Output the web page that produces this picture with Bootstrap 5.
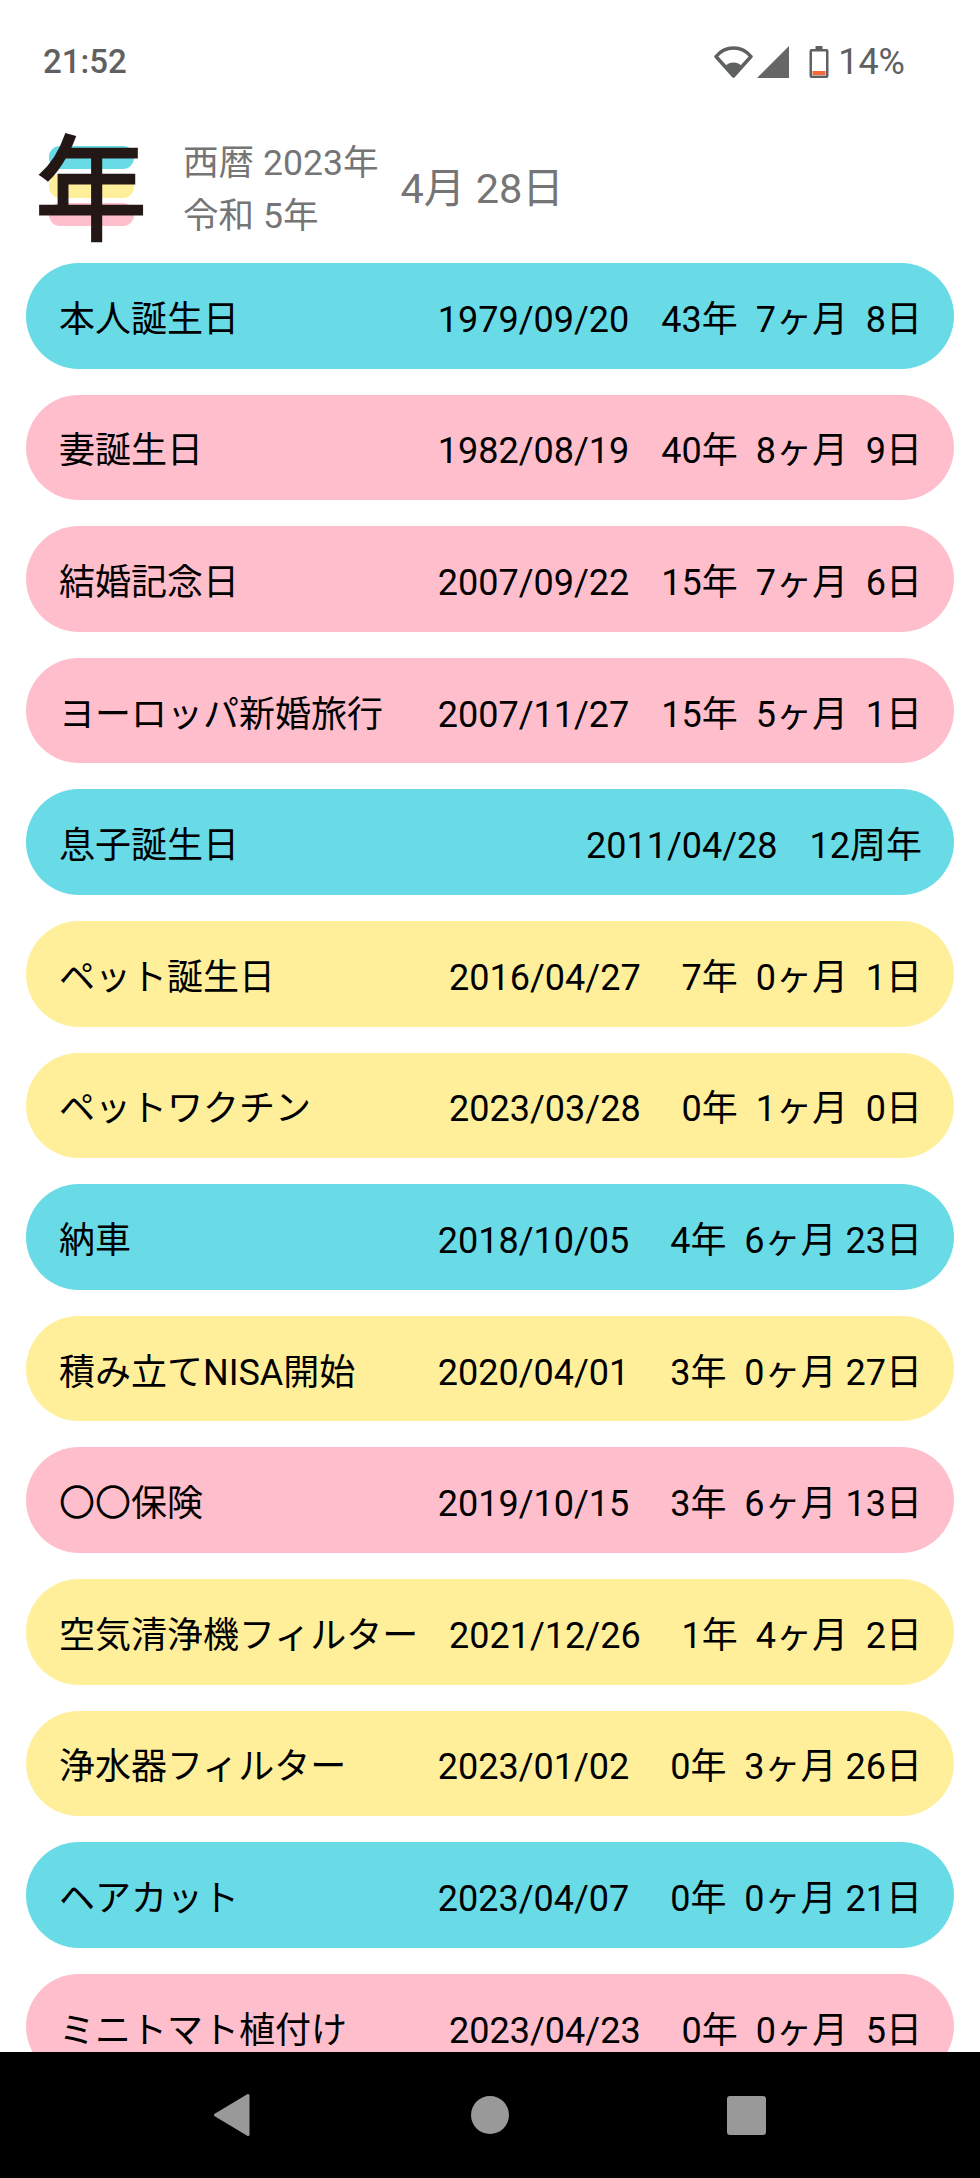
<!doctype html>
<html lang="ja"><head><meta charset="utf-8"><title>記念日</title>
<link href="https://cdn.jsdelivr.net/npm/bootstrap@5.3.0/dist/css/bootstrap.min.css" rel="stylesheet">
<style>
html,body{margin:0;background:#fff}
.phone{width:980px;height:2178px;overflow:hidden;font-family:Roboto,"Noto Sans CJK JP",sans-serif}
.stat{height:110px;padding:13px 75px 0 43px;color:#5f6062;font-size:33px}
.stat-time{font-weight:500}
.stat-ic{gap:4px}
.stat-pct{font-size:36px;margin-left:5px}
.head{height:153px;padding:6px 0 0 43px;color:#757575;font-size:35.6px}
.logo{width:96px;height:112px;flex:none;margin:-6px 44px 0 0}
.bar1,.bar2,.bar3{position:absolute;left:6px;width:85px;height:23px;border-radius:11px}
.bar1{top:15px;background:#68dbe7}.bar2{top:43px;height:24px;background:#ffef9b}.bar3{top:72px;background:#ffbecc}
.kanji{position:absolute;left:-8px;top:-6px;width:112px;text-align:center;font:400 112px/112px "Noto Sans CJK JP",sans-serif;color:#231815;-webkit-text-stroke:2.5px #231815;transform:scaleY(1.02)}
.lines{line-height:53px;margin-right:22px}
.today{font-size:41.5px}
.rows{flex:1;overflow:hidden;padding:0 26px;gap:26px}
.item{flex:none;height:105.6px;padding:8px 32px 0 33px;color:#000;font-size:36px;white-space:pre}
.i-b{background:#68dbe7}.i-p{background:#ffbecc}.i-y{background:#ffef9b}
.dt{margin-right:32px}
.navi{height:126px;background:#000;flex:none}
.navi svg{display:block}
.nav-a{margin-left:214px}.nav-b{margin-left:221px}.nav-c{margin-left:218px}
</style></head><body>
<div class="phone d-flex flex-column">
 <div class="stat d-flex align-items-center justify-content-between flex-none">
  <span class="stat-time">21:52</span>
  <span class="d-flex align-items-center stat-ic">
   <svg width="39" height="32" viewBox="0 0 39 32"><path d="M19.5 30 2 10.5C6.5 5 12.5 2 19.5 2S32.500 5 37 10.500Z" fill="none" stroke="#5f6062" stroke-width="3.500" stroke-linejoin="round"/><path d="M19.500 30 11 20.500C13 18 16 16.500 19.500 16.500S26 18 28 20.500Z" fill="#5f6062"/></svg>
   <svg width="32" height="32" viewBox="0 0 32 32"><path d="M32 0V32H0Z" fill="#666"/></svg>
   <svg class="ms-3" width="20" height="32" viewBox="0 0 19 32"><path d="M6 0h7v3h4a2 2 0 0 1 2 2v25a2 2 0 0 1-2 2H2a2 2 0 0 1-2-2V5a2 2 0 0 1 2-2h4Z" fill="#5f6062"/><rect x="2.500" y="5.500" width="14" height="24" fill="#fff"/><rect x="3" y="25" width="13" height="4" fill="#f4683a"/></svg>
   <span class="stat-pct">14%</span>
  </span>
 </div>
 <div class="head d-flex align-items-center flex-none">
  <div class="logo position-relative">
   <span class="bar1"></span><span class="bar2"></span><span class="bar3"></span>
   <span class="kanji">年</span>
  </div>
  <div class="lines"><div>西暦 2023年</div><div>令和 5年</div></div>
  <div class="today">4月 28日</div>
 </div>
 <div class="rows d-flex flex-column">
  <div class="item i-b rounded-pill d-flex align-items-center"><span class="me-auto">本人誕生日</span><span class="dt">1979/09/20</span><span>43年  7ヶ月  8日</span></div>
  <div class="item i-p rounded-pill d-flex align-items-center"><span class="me-auto">妻誕生日</span><span class="dt">1982/08/19</span><span>40年  8ヶ月  9日</span></div>
  <div class="item i-p rounded-pill d-flex align-items-center"><span class="me-auto">結婚記念日</span><span class="dt">2007/09/22</span><span>15年  7ヶ月  6日</span></div>
  <div class="item i-p rounded-pill d-flex align-items-center"><span class="me-auto">ヨーロッパ新婚旅行</span><span class="dt">2007/11/27</span><span>15年  5ヶ月  1日</span></div>
  <div class="item i-b rounded-pill d-flex align-items-center"><span class="me-auto">息子誕生日</span><span class="dt">2011/04/28</span><span>12周年</span></div>
  <div class="item i-y rounded-pill d-flex align-items-center"><span class="me-auto">ペット誕生日</span><span class="dt">2016/04/27</span><span> 7年  0ヶ月  1日</span></div>
  <div class="item i-y rounded-pill d-flex align-items-center"><span class="me-auto">ペットワクチン</span><span class="dt">2023/03/28</span><span> 0年  1ヶ月  0日</span></div>
  <div class="item i-b rounded-pill d-flex align-items-center"><span class="me-auto">納車</span><span class="dt">2018/10/05</span><span> 4年  6ヶ月 23日</span></div>
  <div class="item i-y rounded-pill d-flex align-items-center"><span class="me-auto">積み立てNISA開始</span><span class="dt">2020/04/01</span><span> 3年  0ヶ月 27日</span></div>
  <div class="item i-p rounded-pill d-flex align-items-center"><span class="me-auto">〇〇保険</span><span class="dt">2019/10/15</span><span> 3年  6ヶ月 13日</span></div>
  <div class="item i-y rounded-pill d-flex align-items-center"><span class="me-auto">空気清浄機フィルター</span><span class="dt">2021/12/26</span><span> 1年  4ヶ月  2日</span></div>
  <div class="item i-y rounded-pill d-flex align-items-center"><span class="me-auto">浄水器フィルター</span><span class="dt">2023/01/02</span><span> 0年  3ヶ月 26日</span></div>
  <div class="item i-b rounded-pill d-flex align-items-center"><span class="me-auto">ヘアカット</span><span class="dt">2023/04/07</span><span> 0年  0ヶ月 21日</span></div>
  <div class="item i-p rounded-pill d-flex align-items-center"><span class="me-auto">ミニトマト植付け</span><span class="dt">2023/04/23</span><span> 0年  0ヶ月  5日</span></div>
 </div>
 <div class="navi d-flex align-items-center">
  <svg class="nav-a" width="36" height="42" viewBox="0 0 36 42"><path d="M34 1.500 1.500 21 34 40.500Z" fill="#999" stroke="#999" stroke-width="3" stroke-linejoin="round"/></svg>
  <svg class="nav-b" width="38" height="38" viewBox="0 0 38 38"><circle cx="19" cy="19" r="19" fill="#999"/></svg>
  <svg class="nav-c" width="39" height="39" viewBox="0 0 39 39"><rect width="39" height="39" rx="3" fill="#999"/></svg>
 </div>
</div>
<script src="https://cdn.jsdelivr.net/npm/bootstrap@5.3.0/dist/js/bootstrap.bundle.min.js"></script>
</body></html>
